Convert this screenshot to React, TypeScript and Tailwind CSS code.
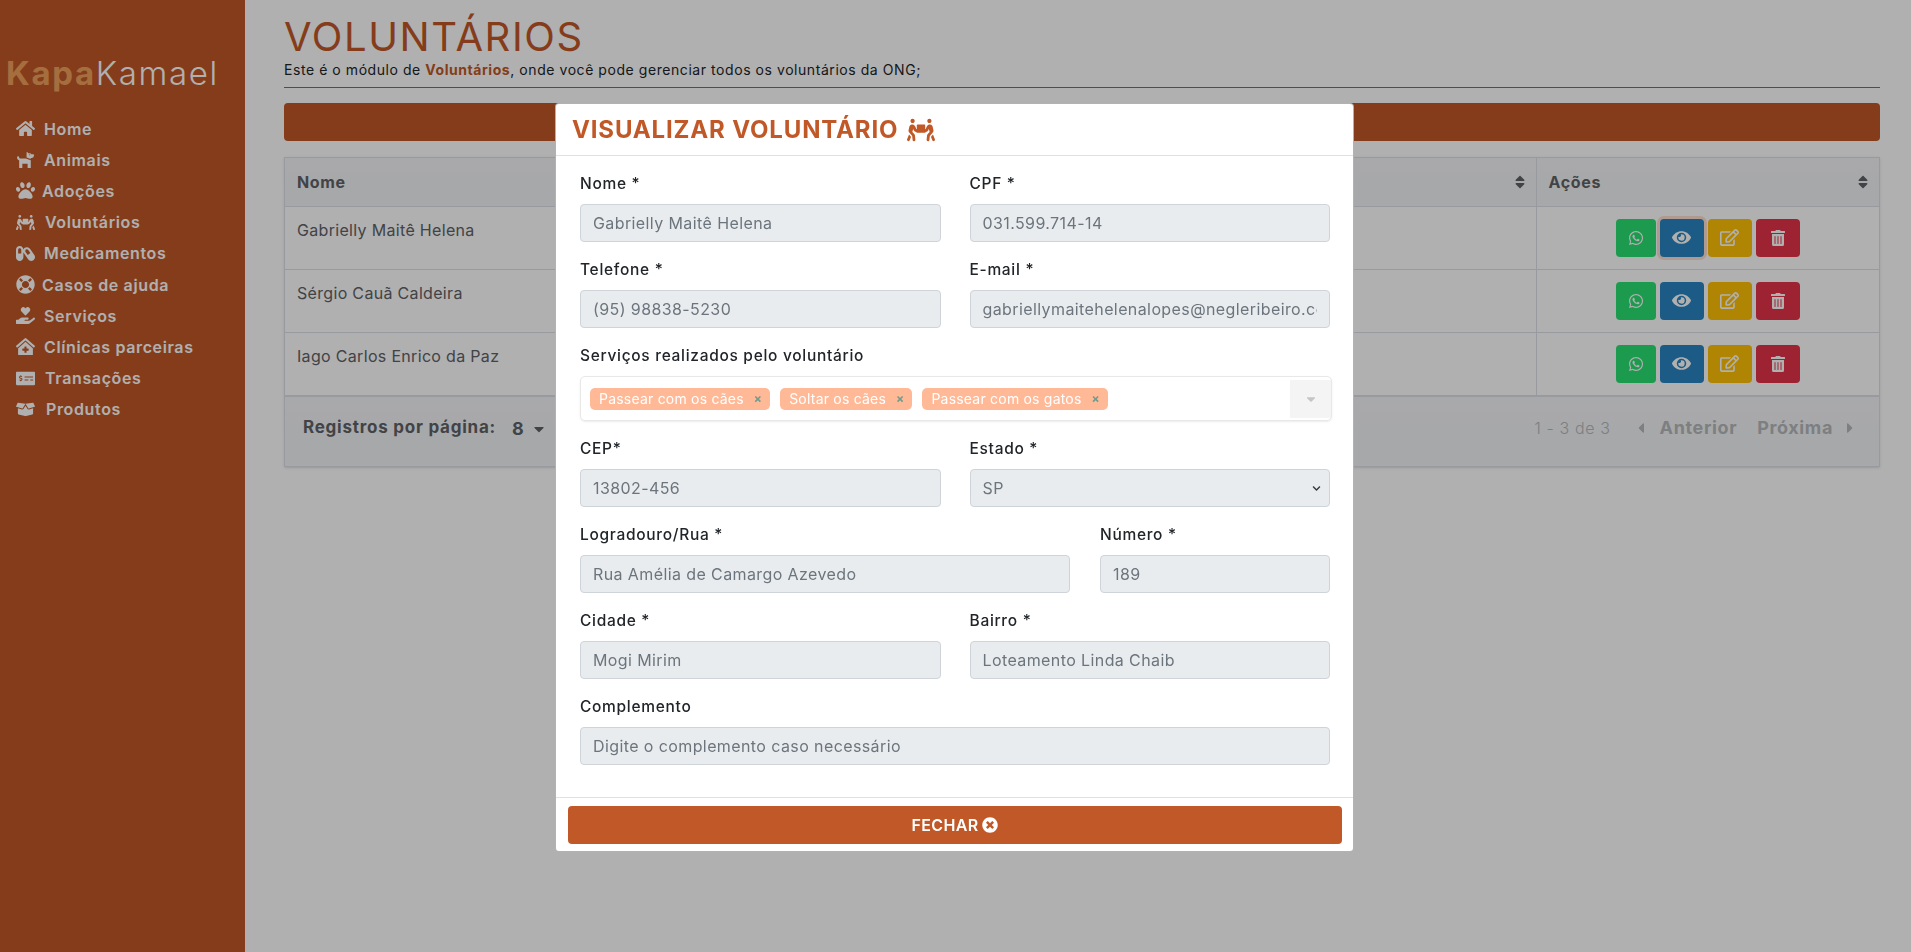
import { FaBoxOpen, FaCapsules, FaCaretDown, FaCaretLeft, FaCaretRight, FaChevronDown, FaClinicMedical, FaDog, FaEye, FaHandHoldingHeart, FaHome, FaLifeRing, FaMoneyCheckAlt, FaPaw, FaPeopleCarry, FaRegEdit, FaSort, FaTimesCircle, FaTrashAlt, FaWhatsapp } from "react-icons/fa"

const menu = [
  { icon: FaHome, label: "Home", gap: "gap-[9px]" },
  { icon: FaDog, label: "Animais", gap: "gap-[9px]" },
  { icon: FaPaw, label: "Adoções", gap: "gap-[7px]" },
  { icon: FaPeopleCarry, label: "Voluntários", gap: "gap-[10px]" },
  { icon: FaCapsules, label: "Medicamentos", gap: "gap-[9px]" },
  { icon: FaLifeRing, label: "Casos de ajuda", gap: "gap-[7px]" },
  { icon: FaHandHoldingHeart, label: "Serviços", gap: "gap-[9px]" },
  { icon: FaClinicMedical, label: "Clínicas parceiras", gap: "gap-[9px]" },
  { icon: FaMoneyCheckAlt, label: "Transações", gap: "gap-[10px]" },
  { icon: FaBoxOpen, label: "Produtos", gap: "gap-[11px]" },
]

const volunteers = ["Gabrielly Maitê Helena", "Sérgio Cauã Caldeira", "Iago Carlos Enrico da Paz"]

function Field({ label, value, select }: { label: string; value: string; select?: boolean }) {
  return (
    <div className="mb-4 min-w-0">
      <div className="mb-2 h-6 text-[15.5px] leading-6 font-medium tracking-[0.045em] text-[#212529]">{label}</div>
      <div className="flex h-[38px] items-center justify-between overflow-hidden rounded border border-[#ced4da] bg-[#e9ecef] px-3 text-base tracking-[0.025em] whitespace-nowrap text-[#6c757d]">
        <span className="overflow-hidden">{value}</span>
        {select && <FaChevronDown className="-mr-1 text-[9px] text-[#343a40]" />}
      </div>
    </div>
  )
}

function Tag({ label }: { label: string }) {
  return (
    <span className="flex h-[22px] items-center gap-[10px] rounded-[5px] bg-[#ffb997] pr-[8px] pl-[9px] text-sm tracking-[0.015em] whitespace-nowrap text-white">
      {label}
      <span className="text-xs font-bold text-[#6f9c8c]">×</span>
    </span>
  )
}

export default function App() {
  return (
    <div className="flex min-h-screen bg-white font-['Inter',sans-serif]">
      <aside className="w-[245px] shrink-0 bg-[#c15827] pt-[50px] text-white">
        <div className="ml-[6px] text-[33px] leading-[46px] tracking-[0.05em]">
          <span className="font-bold text-[#f0a05c]">Kapa</span>
          <span className="font-light">Kamael</span>
        </div>
        <nav className="mt-[17px] pl-[16px]">
          {menu.map((item) => (
            <div key={item.label} className={`flex h-[31.2px] items-center text-base font-semibold tracking-[0.04em] ${item.gap}`}>
              <item.icon className="h-[19px] w-auto" />
              {item.label}
            </div>
          ))}
        </nav>
      </aside>

      <main className="min-w-0 flex-1 pt-4 pr-[31px] pl-[39px]">
        <h1 className="text-[40px] leading-[42px] font-normal tracking-[0.04em] text-[#c15827]">VOLUNTÁRIOS</h1>
        <p className="h-[24px] text-sm leading-6 tracking-[0.04em] text-[#212529]">
          Este é o módulo de <b className="text-[#c15827]">Voluntários</b>, onde você pode gerenciar todos os voluntários da ONG;
        </p>
        <hr className="mt-[5px] border-[#c15827]" />
        <div className="mt-[15px] h-[38px] rounded bg-[#c15827]" />

        <div className="mt-4 border border-[#dcdfe6] shadow-sm">
          <table className="w-full table-fixed border-collapse text-base text-[#606266]">
            <thead>
              <tr className="h-[48px] bg-gradient-to-b from-[#f4f5f8] to-[#f1f3f6] text-left text-[#606266]">
                <th className="w-[1000px] px-3 font-bold tracking-[0.04em]">Nome</th>
                <th className="border-r border-[#dcdfe6] pr-2 text-right">
                  <FaSort className="ml-auto text-[#606266]" />
                </th>
                <th className="w-[343px] px-3 font-bold tracking-[0.04em]">
                  <div className="flex items-center justify-between">
                    Ações
                    <FaSort className="-mr-1 text-[#606266]" />
                  </div>
                </th>
              </tr>
            </thead>
            <tbody>
              {volunteers.map((name, i) => (
                <tr key={name} className="h-[63px] border-t border-[#dcdfe6] align-top">
                  <td className="px-3 pt-[11px] tracking-[0.02em]">{name}</td>
                  <td className="border-r border-[#dcdfe6]" />
                  <td className="pt-[12px] pl-[79px]">
                    <div className="flex gap-1">
                      <button className="flex h-[38px] w-10 items-center justify-center rounded bg-[#29e070] text-white">
                        <FaWhatsapp className="text-base" />
                      </button>
                      <button className={`flex h-[38px] w-11 items-center justify-center rounded bg-[#2985c1] text-white ${i === 0 ? "ring-[3px] ring-[#ffe0d0]" : ""}`}>
                        <FaEye className="text-[19px]" />
                      </button>
                      <button className="flex h-[38px] w-11 items-center justify-center rounded bg-[#ffc107] text-white">
                        <FaRegEdit className="text-[19px]" />
                      </button>
                      <button className="flex h-[38px] w-11 items-center justify-center rounded bg-[#e43349] text-white">
                        <FaTrashAlt className="text-base" />
                      </button>
                    </div>
                  </td>
                </tr>
              ))}
            </tbody>
          </table>
          <div className="flex h-[71px] items-center justify-between border-t-2 border-[#dcdfe6] bg-gradient-to-b from-[#f4f5f8] to-[#f1f3f6] pr-[21px] pb-2 pl-[18px] text-[#606266]">
            <div className="flex items-center text-[17px] font-bold tracking-[0.045em]">
              Registros por página:
              <span className="mt-[3px] ml-4 flex items-center gap-[6px] text-lg">
                8 <FaCaretDown className="text-base" />
              </span>
            </div>
            <div className="flex items-center text-lg font-bold tracking-[0.035em] text-[#b5b8bc]">
              <span className="text-base font-light">1 - 3 de 3</span>
              <FaCaretLeft className="mr-[11px] ml-[22px] text-base" />
              <span>Anterior</span>
              <span className="ml-[20px]">Próxima</span>
              <FaCaretRight className="ml-[9px] text-base" />
            </div>
          </div>
        </div>
      </main>

      {/* Modal */}
      <div className="fixed inset-0 flex justify-center bg-black/[0.31] pt-[103px]">
        <div className="mr-[2px] h-[749px] w-[799px] rounded border border-black/30 bg-white">
          <div className="flex h-[52px] items-center gap-[9px] border-b border-[#dee2e6] pl-4 text-[24px] font-bold tracking-[0.035em] text-[#c15827]">
            VISUALIZAR VOLUNTÁRIO
            <FaPeopleCarry className="text-[28px]" />
          </div>
          <div className="h-[642px] border-b border-[#dee2e6] pt-4 pr-[23px] pl-6">
            <div className="grid grid-cols-2 gap-x-[29px]">
              <Field label="Nome *" value="Gabrielly Maitê Helena" />
              <Field label="CPF *" value="031.599.714-14" />
              <Field label="Telefone *" value="(95) 98838-5230" />
              <Field label="E-mail *" value="gabriellymaitehelenalopes@negleribeiro.com.br" />
            </div>
            <div className="mb-4">
              <div className="mb-2 h-6 text-[15.5px] leading-6 font-medium tracking-[0.045em] text-[#212529]">Serviços realizados pelo voluntário</div>
              <div className="-mr-[2px] flex h-[45px] items-center justify-between rounded-[5px] border border-[#e8e8e8] pl-[9px] shadow-[0_1px_2px_rgba(0,0,0,0.08)]">
                <div className="flex gap-[10px]">
                  <Tag label="Passear com os cães" />
                  <Tag label="Soltar os cães" />
                  <Tag label="Passear com os gatos" />
                </div>
                <div className="flex h-[38px] w-[41px] items-center justify-center bg-[#f4f4f4] text-[#c5c5c5]">
                  <FaCaretDown className="text-sm" />
                </div>
              </div>
            </div>
            <div className="grid grid-cols-2 gap-x-[29px]">
              <Field label="CEP*" value="13802-456" />
              <Field label="Estado *" value="SP" select />
            </div>
            <div className="grid grid-cols-[490px_1fr] gap-x-[30px]">
              <Field label="Logradouro/Rua *" value="Rua Amélia de Camargo Azevedo" />
              <Field label="Número *" value="189" />
            </div>
            <div className="grid grid-cols-2 gap-x-[29px]">
              <Field label="Cidade *" value="Mogi Mirim" />
              <Field label="Bairro *" value="Loteamento Linda Chaib" />
            </div>
            <Field label="Complemento" value="Digite o complemento caso necessário" />
          </div>
          <div className="pt-2 pr-[11px] pl-3">
            <button className="flex h-[38px] w-full items-center justify-center gap-1 rounded bg-[#c15827] text-base font-semibold tracking-[0.02em] text-white">
              FECHAR <FaTimesCircle className="text-base" />
            </button>
          </div>
        </div>
      </div>
    </div>
  )
}
